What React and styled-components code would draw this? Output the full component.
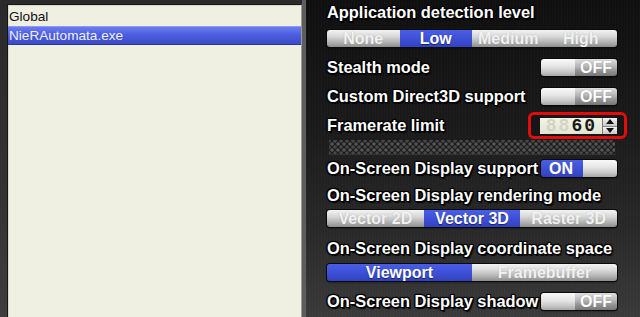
import React from "react";
import styled, { createGlobalStyle, css } from "styled-components";

const Global = createGlobalStyle`
  html, body {
    margin: 0;
    padding: 0;
    background: #1a1a1a;
  }
  body {
    font-family: "Liberation Sans", Arial, sans-serif;
  }
`;

const Window = styled.div`
  width: 640px;
  height: 317px;
  display: flex;
  overflow: hidden;
  background: linear-gradient(180deg, #2a2a2a 0%, #333 60%, #3e3e3e 100%);
`;

const Sidebar = styled.div`
  width: 295px;
  padding: 4px 0 0 7px;
  border-right: 4px solid #5d5d5d;
  display: flex;
`;

const AppList = styled.ul`
  flex: 1;
  margin: 0;
  padding: 2px 0 0;
  list-style: none;
  background: #efefe2;
  border: 1px solid #161616;
  border-right-color: #9a9a90;
  border-bottom: none;
  box-shadow: inset 1px 1px 0 #d8d8cc;
`;

const AppItem = styled.li`
  height: 19px;
  line-height: 19px;
  padding-left: 1px;
  font-size: 13.6px;
  color: #111;
  ${(p) =>
    p.$selected &&
    css`
      color: #eef0ff;
      background: linear-gradient(180deg, #7080f2 0%, #4d5fe0 45%, #3a48c2 100%);
      box-shadow: inset 0 1px 0 #8c9af5, inset 0 -1px 0 #2b3699;
    `}
`;

const Settings = styled.div`
  flex: 1;
  padding-left: 21px;
  padding-right: 23px;
  display: flex;
  flex-direction: column;
  background:
    repeating-linear-gradient(90deg, rgba(255,255,255,0.015) 0 1px, transparent 1px 3px),
    linear-gradient(180deg, #0f0f0f 0%, #1a1a1a 40%, #2a2a2a 75%, #3a3a3a 100%);
`;

const outline = css`
  color: #fff;
  font-weight: bold;
  font-size: 16.4px;
  text-shadow:
    1px 0 0 #000, -1px 0 0 #000, 0 1px 0 #000, 0 -1px 0 #000,
    1.5px 1.5px 1px #000, -1px -1px 1px #000, 1px -1px 1px #000, -1px 1px 1px #000;
  white-space: nowrap;
`;

const Heading = styled.div`
  ${outline};
  height: 24px;
  line-height: 24px;
  margin-top: ${(p) => p.$top || 0}px;
`;

const Row = styled.div`
  height: ${(p) => p.$h || 29}px;
  margin-top: ${(p) => p.$top || 0}px;
  display: flex;
  align-items: center;
  justify-content: space-between;
`;

const Label = styled.span`
  ${outline};
`;

const Segmented = styled.div`
  height: 17px;
  margin-top: ${(p) => p.$top || 0}px;
  display: flex;
  border-radius: 3px;
  overflow: hidden;
  box-shadow: 0 0 0 1px #0a0a0a, 0 1px 2px rgba(0,0,0,0.8);
`;

const silver = css`
  background: linear-gradient(180deg, #f4f4f4 0%, #d6d6d6 40%, #b4b4b4 70%, #8e8e8e 100%);
`;

const Segment = styled.div`
  flex: 1;
  display: flex;
  align-items: center;
  justify-content: center;
  font-size: 16px;
  font-weight: bold;
  color: #f2f2f2;
  text-shadow: 0 0 1px rgba(120,120,120,0.5);
  ${silver};
  ${(p) =>
    p.$active &&
    css`
      color: #fff;
      text-shadow: 0 1px 1px rgba(0,0,40,0.6);
      background: linear-gradient(180deg, #4a5fe6 0%, #3d50d6 50%, #3242c0 100%);
    `}
`;

const Toggle = styled.div`
  width: 76px;
  height: 17px;
  display: flex;
  flex-direction: ${(p) => (p.$on ? "row" : "row-reverse")};
  border-radius: 3px;
  overflow: hidden;
  box-shadow: 0 0 0 1px #0a0a0a, 0 1px 2px rgba(0,0,0,0.8);
`;

const ToggleText = styled.div`
  flex: 1;
  display: flex;
  align-items: center;
  padding: ${(p) => (p.$on ? "0 0 0 8px" : "0 5px 0 0")};
  justify-content: ${(p) => (p.$on ? "flex-start" : "flex-end")};
  font-size: 16px;
  font-weight: bold;
  color: #fff;
  text-shadow: 0 0 1px rgba(90,90,90,0.6);
  ${(p) =>
    p.$on
      ? css`
          background: linear-gradient(180deg, #4a5fe6 0%, #3d50d6 50%, #3242c0 100%);
        `
      : css`
          background: linear-gradient(180deg, #e0e0e0 0%, #b4b4b4 45%, #939393 70%, #767676 100%);
        `}
`;

const Knob = styled.div`
  width: 34px;
  background: linear-gradient(180deg, #fafafa 0%, #e4e4e4 45%, #c8c8c8 75%, #a6a6a6 100%);
`;

const Highlight = styled.div`
  margin-right: -10px;
  padding: 3px 7px 2px 9px;
  border: 3px solid #e20c0c;
  border-radius: 6px;
  background: #161616;
  display: flex;
`;

const Lcd = styled.div`
  width: 62px;
  height: 16px;
  display: flex;
  align-items: center;
  justify-content: flex-end;
  padding-right: 5px;
  box-sizing: border-box;
  background: linear-gradient(180deg, #f2f4e6 0%, #e2e5d3 100%);
  font-family: "Liberation Mono", "DejaVu Sans Mono", monospace;
  font-weight: bold;
  font-size: 18px;
  letter-spacing: 2px;
  line-height: 16px;
`;

const Digit = styled.span`
  color: ${(p) => (p.$ghost ? "#d2d5c4" : "#1a1a1a")};
`;

const Spin = styled.div`
  width: 14px;
  height: 16px;
  display: flex;
  flex-direction: column;
  border-left: 1px solid #777;
`;

const SpinButton = styled.div`
  flex: 1;
  display: flex;
  align-items: center;
  justify-content: center;
  background: linear-gradient(180deg, #f4f4f4 0%, #c8c8c8 100%);
  border-bottom: ${(p) => (p.$up ? "1px solid #888" : "none")};
`;

const Separator = styled.div`
  height: 15px;
  margin: 0 2px;
  background-image:
    radial-gradient(circle, #555 1.4px, transparent 1.9px),
    radial-gradient(circle, #474747 1.4px, transparent 1.9px);
  background-size: 6px 6px, 6px 6px;
  background-position: 0 1px, 3px 4px;
`;

const Arrow = ({ up }) => (
  <svg width="8" height="5" viewBox="0 0 8 5">
    <path d={up ? "M0 5 L4 0 L8 5 Z" : "M0 0 L4 5 L8 0 Z"} fill="#111" />
  </svg>
);

const SwitchControl = ({ on }) => (
  <Toggle $on={on}>
    <ToggleText $on={on}>{on ? "ON" : "OFF"}</ToggleText>
    <Knob />
  </Toggle>
);

const App = () => {
  return (
    <Window>
      <Global />
      <Sidebar>
        <AppList>
          <AppItem>Global</AppItem>
          <AppItem $selected>NieRAutomata.exe</AppItem>
        </AppList>
      </Sidebar>
      <Settings>
        <Heading>Application detection level</Heading>
        <Segmented $top={6}>
          <Segment>None</Segment>
          <Segment $active>Low</Segment>
          <Segment>Medium</Segment>
          <Segment>High</Segment>
        </Segmented>
        <Row $top={6}>
          <Label>Stealth mode</Label>
          <SwitchControl />
        </Row>
        <Row>
          <Label>Custom Direct3D support</Label>
          <SwitchControl />
        </Row>
        <Row>
          <Label>Framerate limit</Label>
          <Highlight>
            <Lcd>
              <Digit $ghost>88</Digit>
              <Digit>60</Digit>
            </Lcd>
            <Spin>
              <SpinButton $up>
                <Arrow up />
              </SpinButton>
              <SpinButton>
                <Arrow />
              </SpinButton>
            </Spin>
          </Highlight>
        </Row>
        <Separator />
        <Row $h={27}>
          <Label>On-Screen Display support</Label>
          <SwitchControl on />
        </Row>
        <Heading $top={1}>On-Screen Display rendering mode</Heading>
        <Segmented $top={3}>
          <Segment>Vector 2D</Segment>
          <Segment $active>Vector 3D</Segment>
          <Segment>Raster 3D</Segment>
        </Segmented>
        <Heading $top={9}>On-Screen Display coordinate space</Heading>
        <Segmented $top={4}>
          <Segment $active>Viewport</Segment>
          <Segment>Framebuffer</Segment>
        </Segmented>
        <Row $top={6}>
          <Label>On-Screen Display shadow</Label>
          <SwitchControl />
        </Row>
      </Settings>
    </Window>
  );
};

export default App;
